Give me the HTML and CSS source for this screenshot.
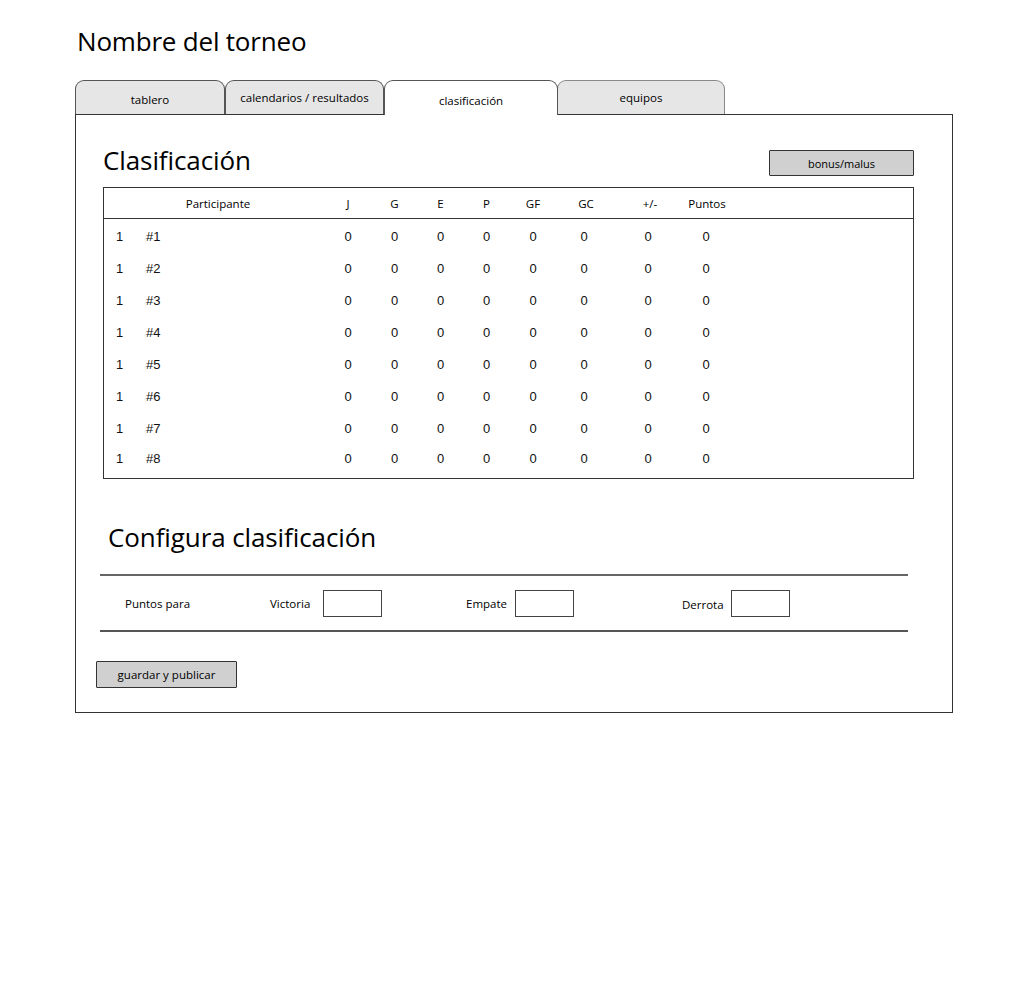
FILE: index.html
```html
<!DOCTYPE html>
<html lang="es">
<head>
<meta charset="utf-8">
<title>Nombre del torneo</title>
<link rel="stylesheet" href="styles.css">
</head>
<body>
<div class="page">
  <h1 class="title">Nombre del torneo</h1>
  <div class="tabs">
    <div class="tab t1">tablero</div>
    <div class="tab t2 up">calendarios / resultados</div>
    <div class="tab t3 active">clasificación</div>
    <div class="tab t4 up">equipos</div>
  </div>
  <div class="panel">
    <div class="head-row">
      <h2 class="heading">Clasificación</h2>
      <button class="btn bonus">bonus/malus</button>
    </div>
    <div class="table">
      <div class="thead">
        <div class="c-part">Participante</div>
        <div>J</div><div>G</div><div>E</div><div>P</div><div>GF</div><div>GC</div><div>+/-</div><div>Puntos</div>
      </div>
      <div class="tbody">
        <div class="row"><div class="c-rank">1</div><div class="c-name">#1</div><div>0</div><div>0</div><div>0</div><div>0</div><div>0</div><div>0</div><div>0</div><div>0</div></div>
        <div class="row"><div class="c-rank">1</div><div class="c-name">#2</div><div>0</div><div>0</div><div>0</div><div>0</div><div>0</div><div>0</div><div>0</div><div>0</div></div>
        <div class="row"><div class="c-rank">1</div><div class="c-name">#3</div><div>0</div><div>0</div><div>0</div><div>0</div><div>0</div><div>0</div><div>0</div><div>0</div></div>
        <div class="row"><div class="c-rank">1</div><div class="c-name">#4</div><div>0</div><div>0</div><div>0</div><div>0</div><div>0</div><div>0</div><div>0</div><div>0</div></div>
        <div class="row"><div class="c-rank">1</div><div class="c-name">#5</div><div>0</div><div>0</div><div>0</div><div>0</div><div>0</div><div>0</div><div>0</div><div>0</div></div>
        <div class="row"><div class="c-rank">1</div><div class="c-name">#6</div><div>0</div><div>0</div><div>0</div><div>0</div><div>0</div><div>0</div><div>0</div><div>0</div></div>
        <div class="row"><div class="c-rank">1</div><div class="c-name">#7</div><div>0</div><div>0</div><div>0</div><div>0</div><div>0</div><div>0</div><div>0</div><div>0</div></div>
        <div class="row"><div class="c-rank">1</div><div class="c-name">#8</div><div>0</div><div>0</div><div>0</div><div>0</div><div>0</div><div>0</div><div>0</div><div>0</div></div>
      </div>
    </div>
    <h2 class="heading config">Configura clasificación</h2>
    <div class="config-box">
      <div class="pp">Puntos para</div>
      <div class="field f1"><span class="lbl">Victoria</span><span class="inp"></span></div>
      <div class="field f2"><span class="lbl">Empate</span><span class="inp"></span></div>
      <div class="field f3"><span class="lbl">Derrota</span><span class="inp"></span></div>
    </div>
    <button class="btn save">guardar y publicar</button>
  </div>
</div>
</body>
</html>
```

FILE: styles.css
```css
html, body {
  margin: 0;
  padding: 0;
  background: #fff;
}
body {
  font-family: "Open Sans", "DejaVu Sans", sans-serif;
  color: #000;
}
.page {
  padding: 26px 0 0 75px;
  width: 878px;
}
.title {
  margin: 0 0 0 2px;
  font-size: 26px;
  font-weight: 400;
  line-height: 30px;
  height: 30px;
  letter-spacing: -0.2px;
}
.tabs {
  display: flex;
  margin-top: 24px;
  height: 34px;
  align-items: flex-end;
}
.tab {
  box-sizing: border-box;
  height: 34px;
  border: 1px solid #555;
  border-bottom: none;
  border-radius: 9px 9px 0 0;
  background: #e6e6e6;
  font-size: 11.5px;
  display: flex;
  align-items: center;
  justify-content: center;
  padding-top: 4px;
}
.tab.up { padding-top: 0; }
.t1 { width: 150px; }
.t2 { width: 159px; }
.t3 { width: 174px; }
.t4 { width: 168px; margin-left: -1px; border-color: #888; }
.tab.active {
  background: #fff;
  height: 35px;
  margin-bottom: -1px;
  position: relative;
  z-index: 1;
}
.panel {
  box-sizing: border-box;
  width: 878px;
  height: 599px;
  border: 1px solid #333;
  padding: 28px 38px 0 27px;
}
.head-row {
  display: flex;
  justify-content: space-between;
  height: 34px;
}
.heading {
  margin: 0;
  font-size: 26px;
  font-weight: 400;
  line-height: 34px;
  letter-spacing: -0.1px;
}
.btn {
  box-sizing: border-box;
  background: #d0d0d0;
  border: 1px solid #333;
  border-radius: 1px;
  font-family: "Open Sans", "DejaVu Sans", sans-serif;
  font-size: 11px;
  color: #000;
  padding: 0;
  cursor: pointer;
}
.bonus {
  width: 145px;
  height: 26px;
  margin-top: 7px;
}
.table {
  box-sizing: border-box;
  margin-top: 10px;
  width: 811px;
  height: 292px;
  border: 1px solid #333;
}
.thead, .row {
  display: grid;
  grid-template-columns: 36px 185px 46px 47px 45px 47px 46px 56px 72px 44px 1fr;
  align-items: center;
}
.thead {
  height: 30px;
  border-bottom: 1px solid #333;
  font-size: 11.5px;
}
.thead > div { text-align: center; }
.thead .c-part {
  grid-column: 1 / span 2;
  padding-left: 7px;
}
.thead > div:nth-child(7) { padding-left: 4px; }
.thead > div:nth-child(8) { padding-left: 4px; }
.thead > div:nth-child(9) { padding-left: 2px; }
.tbody { padding-top: 1px; }
.row {
  height: 32px;
  font-family: "Liberation Sans", Arial, sans-serif;
  font-size: 13px;
  color: #111;
}
.row:last-child { height: 28px; }
.row > div { text-align: center; }
.row .c-rank { text-align: left; padding-left: 12px; }
.row .c-name { text-align: left; padding-left: 6px; }
.heading.config {
  margin: 41px 0 0 5px;
}
.config-box {
  box-sizing: border-box;
  margin: 20px 0 0 -3px;
  width: 808px;
  height: 58px;
  border-top: 2px solid #666;
  border-bottom: 2px solid #555;
  display: flex;
  align-items: center;
  font-size: 11.5px;
}
.pp {
  width: 170px;
  padding-left: 25px;
  box-sizing: border-box;
  padding-top: 1px;
}
.field {
  display: flex;
  align-items: center;
}
.f1 { width: 196px; }
.f2 { width: 216px; }
.lbl { display: inline-block; }
.f1 .lbl { width: 53px; }
.f2 .lbl { width: 49px; }
.f3 .lbl { width: 49px; padding-top: 2px; }
.inp {
  box-sizing: border-box;
  display: inline-block;
  width: 59px;
  height: 27px;
  border: 1px solid #444;
  background: #fff;
}
.save {
  display: block;
  width: 141px;
  height: 27px;
  margin: 29px 0 0 -7px;
  font-size: 11.5px;
}
```
